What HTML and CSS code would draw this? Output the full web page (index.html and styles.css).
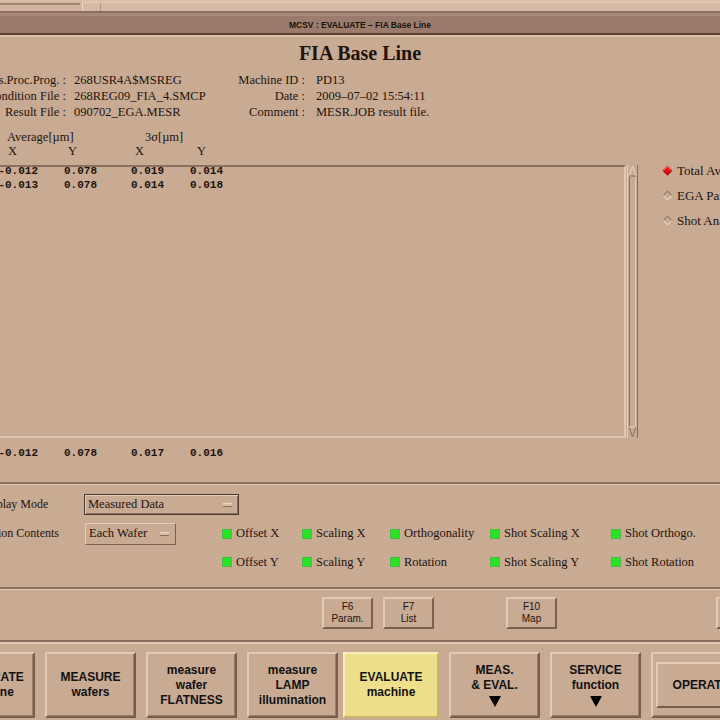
FILE: index.html
```html
<!DOCTYPE html>
<html lang="en">
<head>
  <meta charset="UTF-8">
  <title>MCSV : EVALUATE - FIA Base Line</title>
  <meta name="viewport" content="width=device-width, initial-scale=1.0">
  <link rel="stylesheet" href="styles.css">
</head>
<body>
  <div class="window">
    <div class="hscroll">
      <span class="hs-track"></span>
      <span class="hs-thumb"><span class="hs-grip"></span></span>
    </div>
    <div class="titlebar">MCSV : EVALUATE – FIA Base Line</div>

    <div class="client">
      <h1>FIA Base Line</h1>

      <div class="info">
        <dl class="info-left">
          <dt>Meas.Proc.Prog. :</dt><dd>268USR4A$MSREG</dd>
          <dt>Condition File :</dt><dd>268REG09_FIA_4.SMCP</dd>
          <dt>Result File :</dt><dd>090702_EGA.MESR</dd>
        </dl>
        <dl class="info-right">
          <dt>Machine ID :</dt><dd>PD13</dd>
          <dt>Date :</dt><dd>2009–07–02 15:54:11</dd>
          <dt>Comment :</dt><dd>MESR.JOB result file.</dd>
        </dl>
      </div>

      <div class="results">
        <div class="results-main">
          <div class="heads">
            <div class="head-groups"><span></span><span>Average[µm]</span><span>3σ[µm]</span></div>
            <div class="head-axes"><span></span><span>X</span><span>Y</span><span>X</span><span>Y</span></div>
          </div>

          <div class="listwrap">
            <div class="listbox">
              <div class="num-row"><span>-0.012</span><span>0.078</span><span>0.019</span><span>0.014</span></div>
              <div class="num-row"><span>-0.013</span><span>0.078</span><span>0.014</span><span>0.018</span></div>
            </div>
            <div class="vscroll">
              <svg class="sb-arrow" width="9" height="12" viewBox="0 0 9 12">
                <polyline points="1,11 4.5,1 8,11" fill="none" stroke="#ecd5c2" stroke-width="1"/>
                <line x1="1" y1="11" x2="8" y2="11" stroke="#8a6c5c"/>
              </svg>
              <div class="sb-thumb"></div>
              <svg class="sb-arrow" width="9" height="12" viewBox="0 0 9 12">
                <polyline points="1,1 4.5,11 8,1" fill="none" stroke="#8a6c5c" stroke-width="1"/>
                <line x1="1" y1="1" x2="8" y2="1" stroke="#ecd5c2"/>
              </svg>
            </div>
          </div>

          <div class="num-row total"><span>-0.012</span><span>0.078</span><span>0.017</span><span>0.016</span></div>
        </div>

        <div class="view-select">
          <div class="radio on"><span class="diamond"></span>Total Average</div>
          <div class="radio"><span class="diamond"></span>EGA Parameter</div>
          <div class="radio"><span class="diamond"></span>Shot Analysis</div>
        </div>
      </div>

      <div class="groove"></div>

      <div class="options">
        <div class="opt-label">Display Mode</div>
        <div class="dropdown mode">Measured Data<span class="dd-mark"></span></div>

        <div class="opt-label">Option Contents</div>
        <div class="dropdown scope">Each Wafer<span class="dd-mark"></span></div>

        <div class="checks">
          <div class="check"><span class="box"></span>Offset X</div>
          <div class="check"><span class="box"></span>Scaling X</div>
          <div class="check"><span class="box"></span>Orthogonality</div>
          <div class="check"><span class="box"></span>Shot Scaling X</div>
          <div class="check"><span class="box"></span>Shot Orthogo.</div>
          <div class="check"><span class="box"></span>Offset Y</div>
          <div class="check"><span class="box"></span>Scaling Y</div>
          <div class="check"><span class="box"></span>Rotation</div>
          <div class="check"><span class="box"></span>Shot Scaling Y</div>
          <div class="check"><span class="box"></span>Shot Rotation</div>
        </div>
      </div>

      <div class="groove"></div>
    </div>

    <div class="fkeys">
      <div class="fkey">F6<br>Param.</div>
      <div class="fkey">F7<br>List</div>
      <div class="fkey gap1">F10<br>Map</div>
      <div class="fkey gap2">F12<br>Exit</div>
    </div>

    <div class="groove thick"></div>

    <div class="menu">
      <div class="menu-btn">CALIBRATE<br>machine</div>
      <div class="menu-btn">MEASURE<br>wafers</div>
      <div class="menu-btn">measure<br>wafer<br>FLATNESS</div>
      <div class="menu-btn">measure<br>LAMP<br>illumination</div>
      <div class="menu-btn active">EVALUATE<br>machine</div>
      <div class="menu-btn">MEAS.<br>&amp; EVAL.<span class="arrow-down"></span></div>
      <div class="menu-btn">SERVICE<br>function<span class="arrow-down"></span></div>
      <div class="menu-btn nested"><span class="inner">OPERATOR</span></div>
    </div>
  </div>
</body>
</html>
```

FILE: styles.css
```css
* {
  box-sizing: border-box;
}
html, body {
  margin: 0;
  height: 100%;
  overflow: hidden;
}
body {
  background: #c9aa93;
  color: #1e140e;
  font-family: "Liberation Serif", serif;
  font-size: 12.5px;
}
.window {
  width: 880px;
  margin-left: -80px;
}

/* top scroller */
.hscroll {
  display: flex;
  height: 13px;
  background: #d2b49e;
  border-top: 2px solid #dcbfab;
  border-bottom: 2px solid #8d6e5e;
}
.hs-track {
  width: 160px;
  height: 2px;
  margin-top: 1px;
  background: #a38573;
}
.hs-thumb {
  flex: 1;
  margin-left: 2px;
  background: #d6baa4;
  border-left: 1px solid #ecd6c4;
  border-top: 1px solid #e4c9b5;
}
.hs-grip {
  display: block;
  width: 18px;
  height: 100%;
  border-right: 1px solid #b49684;
}

.titlebar {
  height: 22px;
  padding-top: 2px;
  background: #9b7c6c;
  border-top: 3px solid #a88978;
  border-bottom: 2px solid #5c3c2c;
  text-align: center;
  font: bold 8.5px/15px "Liberation Sans", sans-serif;
  color: #1a120e;
}

.client {
  border-top: 2px solid #dcc1ab;
}
h1 {
  margin: 0;
  padding-top: 4px;
  font-size: 20px;
  line-height: 24px;
  text-align: center;
}

/* file / machine info */
.info {
  display: flex;
  margin-top: 7px;
  line-height: 16px;
}
dl {
  display: grid;
  margin: 0;
}
dt {
  text-align: right;
  white-space: nowrap;
}
dd {
  margin: 0;
  white-space: nowrap;
}
.info-left {
  grid-template-columns: 146px 159px;
  column-gap: 8px;
}
.info-right {
  grid-template-columns: 72px auto;
  column-gap: 11px;
}

/* result table */
.results {
  display: flex;
  align-items: flex-start;
}
.results-main {
  width: 718px;
}
.heads {
  margin-top: 10px;
  line-height: 14px;
}
.head-groups {
  display: grid;
  grid-template-columns: 87px 138px auto;
}
.head-axes {
  display: grid;
  grid-template-columns: 88px 60px 67px 62px auto;
}
.listwrap {
  display: flex;
  margin-top: 7px;
}
.listbox {
  width: 706px;
  height: 273px;
  border: 2px solid;
  border-color: #8c6e5e #e2c8b2 #e2c8b2 #8c6e5e;
}
.listbox .num-row:first-child {
  margin-top: -3px;
}
.num-row {
  display: grid;
  grid-template-columns: 116px 59px 67px 59px;
  font: bold 11px/14px "Liberation Mono", monospace;
}
.num-row span {
  text-align: right;
}
.num-row.total {
  margin-top: 8px;
  padding-left: 2px;
}

.vscroll {
  display: flex;
  flex-direction: column;
  align-items: center;
  width: 11px;
  height: 273px;
  margin-left: 1px;
  border-left: 1px solid #e6cdb9;
  border-right: 1px solid #8c6e5e;
}
.sb-arrow {
  flex: none;
}
.sb-thumb {
  flex: 1;
  width: 7px;
  border-left: 1px solid #8c6e5e;
  border-right: 1px solid #e6cdb9;
}

.view-select {
  margin-left: 22px;
  margin-top: 38px;
  font-size: 13px;
  line-height: 25px;
  white-space: nowrap;
}
.radio {
  display: flex;
  align-items: center;
}
.diamond {
  width: 7px;
  height: 7px;
  margin: 0 6px 0 4px;
  transform: rotate(45deg);
  border: 1px solid;
  border-color: #8f7565 #ecd6c4 #ecd6c4 #8f7565;
}
.radio.on .diamond {
  background: #e8141a;
  border-color: #f46a6a #9c0a0a #9c0a0a #f46a6a;
}

.groove {
  height: 3px;
  margin-top: 22px;
  border-top: 2px solid #8c6e5e;
  border-bottom: 1px solid #e2c8b2;
}
.options + .groove {
  margin-top: 15px;
}
.groove.thick {
  height: 4px;
  margin-top: 0;
  border-bottom-width: 2px;
}

/* display options */
.options {
  display: grid;
  grid-template-columns: 164px 138px auto;
  grid-template-rows: 21px 23px 20px;
  row-gap: 7px;
  margin-top: 9px;
  align-items: center;
}
.opt-label {
  grid-column: 1;
  padding-left: 60px;
  font-size: 12px;
  white-space: nowrap;
}
.dropdown {
  display: flex;
  align-items: center;
  justify-content: space-between;
  padding: 0 6px 0 3px;
  white-space: nowrap;
}
.dropdown.mode {
  grid-column: 2 / 4;
  justify-self: start;
  width: 155px;
  height: 21px;
  border: 1px solid #4a3a30;
  box-shadow: inset 1px 1px 0 #e6ccb8, inset -1px -1px 0 #8c6e5e;
}
.dropdown.scope {
  grid-column: 2;
  width: 91px;
  height: 22px;
  margin-left: 1px;
  border: 1px solid;
  border-color: #e6ccb8 #7e604f #7e604f #e6ccb8;
}
.dd-mark {
  width: 9px;
  height: 4px;
  background: #d6bba5;
  border-top: 1px solid #eed8c6;
  border-bottom: 1px solid #8c6e5e;
}
.checks {
  grid-column: 3;
  grid-row: 2 / 4;
  align-self: stretch;
  display: grid;
  grid-template-columns: 80px 88px 100px 121px auto;
  grid-template-rows: 23px 20px;
  row-gap: 7px;
  align-items: center;
}
.check {
  display: flex;
  align-items: center;
  gap: 4px;
  white-space: nowrap;
}
.box {
  width: 10px;
  height: 10px;
  background: #25e425;
  border: 1px solid #4fb84a;
}

/* function keys */
.fkeys {
  display: flex;
  gap: 10px;
  height: 50px;
  padding: 7px 0 0 402px;
}
.fkey {
  display: flex;
  flex-direction: column;
  justify-content: center;
  align-items: center;
  flex: none;
  width: 51px;
  height: 32px;
  font: 10px/12px "Liberation Sans", sans-serif;
  text-align: center;
  border: 2px solid;
  border-color: #e4cab4 #7e604f #7e604f #e4cab4;
}
.fkey.gap1 {
  margin-left: 62px;
}
.fkey.gap2 {
  margin-left: 149px;
}

/* main menu */
.menu {
  display: grid;
  grid-template-columns: repeat(7, 91px) 110px;
  column-gap: 10px;
  padding: 8px 0 0 24px;
}
.menu-btn {
  display: flex;
  flex-direction: column;
  justify-content: center;
  align-items: center;
  height: 66px;
  text-align: center;
  font: bold 12px/15px "Liberation Sans", sans-serif;
  color: #111;
  border: 2px solid;
  border-color: #e4cab5 #7a5c4c #7a5c4c #e4cab5;
  box-shadow: inset -1px -1px 0 #9c7e6c;
}
.menu-btn.active {
  margin-left: -5px;
  background: #eee08b;
  border-color: #f8eec0 #c4b46c #c4b46c #f8eec0;
  box-shadow: none;
}
.arrow-down {
  width: 0;
  height: 0;
  margin-top: 3px;
  border-left: 6px solid transparent;
  border-right: 6px solid transparent;
  border-top: 11px solid #000;
}
.menu-btn.nested {
  align-items: stretch;
  padding: 8px 3px;
}
.menu-btn.nested .inner {
  flex: 1;
  display: flex;
  align-items: center;
  justify-content: center;
  border: 2px solid;
  border-color: #e4cab5 #7a5c4c #7a5c4c #e4cab5;
}
```
